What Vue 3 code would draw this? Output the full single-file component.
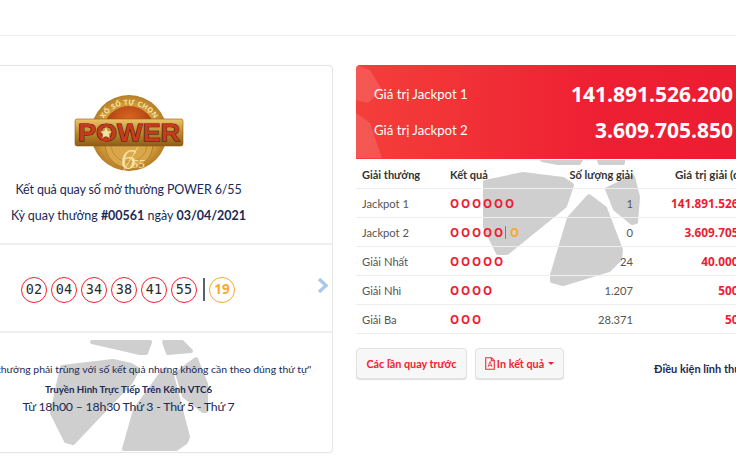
<script setup>
const balls = ['02', '04', '34', '38', '41', '55']
const rows = [
  { name: 'Jackpot 1', red: 6, gold: false, qty: '1', val: '141.891.526.200' },
  { name: 'Jackpot 2', red: 5, gold: true, qty: '0', val: '3.609.705.850' },
  { name: 'Giải Nhất', red: 5, gold: false, qty: '24', val: '40.000.000' },
  { name: 'Giải Nhì', red: 4, gold: false, qty: '1.207', val: '500.000' },
  { name: 'Giải Ba', red: 3, gold: false, qty: '28.371', val: '50.000' }
]
</script>

<template>
  <div class="page">
    <div class="topbar"></div>
    <main class="main">
      <section class="card">
        <svg class="wm-left" width="409" height="387" viewBox="-76 65 409 387" aria-hidden="true">
          <g fill="#cfcfcf" stroke="#cfcfcf" stroke-width="4" stroke-linejoin="round">
            <polygon points="92,342 150,342 146,353 140,353" />
            <polygon points="164,342 182,342 191,351 168,353" />
            <polygon points="62,367 113,361 131,365 138,369 131,382 73,443 66,441 52,413" />
            <polygon points="177,373 196,359 206,384 206,411 203,411 184,396" />
            <polygon points="164,370 172,375 188,437 186,442 176,449 124,449 135,410" />
          </g>
        </svg>
        <div class="intro">
          <svg class="logo" width="110" height="80" viewBox="0 0 110 80" aria-hidden="true">
            <defs>
              <radialGradient id="disc" cx="50%" cy="50%" r="55%">
                <stop offset="0" stop-color="#f0c766" />
                <stop offset="0.7" stop-color="#d09a38" />
                <stop offset="1" stop-color="#a9701f" />
              </radialGradient>
              <linearGradient id="band" x1="0" y1="0" x2="0" y2="1">
                <stop offset="0" stop-color="#eec468" />
                <stop offset="0.5" stop-color="#c18a2d" />
                <stop offset="1" stop-color="#8d5c17" />
              </linearGradient>
              <radialGradient id="inner" cx="50%" cy="30%" r="70%">
                <stop offset="0" stop-color="#e26a1f" />
                <stop offset="1" stop-color="#8d2c10" />
              </radialGradient>
              <path id="arc" d="M26 33 A30 30 0 0 1 84 33" />
            </defs>
            <circle cx="55" cy="39" r="38" fill="url(#disc)" />
            <circle cx="55" cy="38" r="26" fill="url(#inner)" />
            <text class="arc-text"><textPath href="#arc" startOffset="50%" text-anchor="middle">XỔ SỐ TỰ CHỌN</textPath></text>
            <circle cx="55" cy="50" r="24" fill="#d9a64a" stroke="#b27c27" stroke-width="1" />
            <circle cx="55" cy="50" r="18" fill="none" stroke="#c08c34" stroke-width="1" />
            <rect x="1" y="25" width="108" height="27" rx="2" fill="url(#band)" stroke="#8d5c17" stroke-width="0.6" />
            <text class="power" x="55" y="47" text-anchor="middle" textLength="102" lengthAdjust="spacingAndGlyphs">POWER</text>
            <polygon points="32,33 33.7,37.2 38,37.4 34.7,40 35.8,44.2 32,41.8 28.2,44.2 29.3,40 26,37.4 30.3,37.2" fill="#f6e2a8" />
            <text class="six" x="47" y="75">6</text>
            <text class="ff" x="58" y="74">55</text>
            <line x1="64" y1="53" x2="48" y2="79" stroke="#f8e3a6" stroke-width="0.8" />
          </svg>
          <p class="title">Kết quả quay số mở thưởng POWER 6/55</p>
          <p class="draw">Kỳ quay thưởng <b>#00561</b> ngày <b>03/04/2021</b></p>
        </div>
        <div class="balls">
          <span v-for="b in balls" :key="b" class="ball">{{ b }}</span>
          <span class="sep"></span>
          <span class="ball gold">19</span>
          <svg class="chev" width="11" height="15" viewBox="0 0 11 15" aria-hidden="true">
            <path d="M2 1 L9 7.5 L2 14" fill="none" stroke="#a9c9e8" stroke-width="3.4" />
          </svg>
        </div>
        <div class="note">
          <p class="quote">"Các số dự thưởng phải trùng với số kết quả nhưng không cần theo đúng thứ tự"</p>
          <p class="tv">Truyền Hình Trực Tiếp Trên Kênh VTC6</p>
          <p class="time">Từ 18h00 – 18h30 Thứ 3 - Thứ 5 - Thứ 7</p>
        </div>
      </section>

      <section class="right">
        <svg class="wm-right" width="412" height="227" viewBox="356 160 412 227" aria-hidden="true">
          <g fill="#cfcfcf" stroke="#cfcfcf" stroke-width="4" stroke-linejoin="round">
            <polygon points="485,182 523,174 563,179 572,185 565,206 507,253 498,253 485,227" />
            <polygon points="589,196 605,208 621,250 620,259 609,270 563,284 552,281 552,275 569,218" />
            <polygon points="607,189 633,177 638,197 636,222 632,223 615,209" />
            <polygon points="542,160 558,163 579,163 581,160" />
            <polygon points="599,160 600,163 623,163 623,160" />
          </g>
        </svg>
        <div class="jackpot">
          <svg class="wm-red" width="40" height="93" viewBox="0 0 40 93" aria-hidden="true">
            <g fill="#ffffff" fill-opacity="0.13">
              <polygon points="0,0 14,5 26,25 12,38 0,35" />
              <polygon points="0,48 14,58 26,93 0,93" />
            </g>
          </svg>
          <div class="jp-row"><span>Giá trị Jackpot 1</span><b>141.891.526.200</b></div>
          <div class="jp-row"><span>Giá trị Jackpot 2</span><b>3.609.705.850</b></div>
        </div>
        <div class="table">
          <div class="row head">
            <span class="c1">Giải thưởng</span>
            <span class="c2">Kết quả</span>
            <span class="c3">Số lượng giải</span>
            <span class="c4">Giá trị giải (đồng)</span>
          </div>
          <div v-for="r in rows" :key="r.name" class="row">
            <span class="c1">{{ r.name }}</span>
            <span class="c2 marks">
              <i v-for="n in r.red" :key="n">O</i>
              <template v-if="r.gold"><em class="bar"></em><i class="g">O</i></template>
            </span>
            <span class="c3">{{ r.qty }}</span>
            <span class="c4 val">{{ r.val }}</span>
          </div>
        </div>
        <div class="actions">
          <button class="btn b1">Các lần quay trước</button>
          <button class="btn btn2">
            <svg width="10" height="13" viewBox="0 0 10 13" aria-hidden="true">
              <path d="M1 .7H6.5L9.3 3.5V12.3H.7V.7Z M6.3 .8V3.7H9.2" fill="none" stroke="#f0293a" stroke-width="1.1" />
              <path d="M5 4.5 L3 10 M5 4.5 L7 10 M3.6 8.4H6.4" fill="none" stroke="#f0293a" stroke-width=".8" />
            </svg>
            In kết quả
            <span class="caret"></span>
          </button>
          <a class="terms">Điều kiện lĩnh thưởng</a>
        </div>
      </section>
    </main>
  </div>
</template>

<style>
html, body { margin: 0; background: #fff; overflow: hidden; }
</style>

<style scoped>
.page {
  width: 736px;
  height: 460px;
  overflow: hidden;
  font-family: "Lato", "Open Sans", sans-serif;
  color: #1b2a56;
}
.topbar { height: 35px; border-bottom: 1px solid #eeeeee; }
.main { display: flex; gap: 23px; margin-left: -76px; padding-top: 29px; width: 900px; }
p { margin: 0; }

.card {
  position: relative;
  width: 407px;
  height: 386px;
  flex: none;
  border: 1px solid #e6e6e6;
  border-radius: 4px;
  box-shadow: 0 0 1px #e4e4e4;
  text-align: center;
}
.wm-left { position: absolute; left: -1px; top: -1px; }
.intro { position: relative; height: 179px; box-sizing: border-box; padding-top: 28px; border-bottom: 2px solid #eeeeee; }
.logo { display: block; margin: 0 auto; width: 110px; height: 80px; }
.arc-text { font: bold 7px "Open Sans", sans-serif; fill: #f7e2ab; letter-spacing: .3px; }
.power { font: 900 24px "Liberation Sans", sans-serif; fill: #c83a1c; stroke: #2a1a10; stroke-width: 1; paint-order: stroke; }
.six { font: italic 30px "Liberation Serif", serif; fill: #f8e3a6; }
.ff { font: italic 13px "Liberation Serif", serif; fill: #f8e3a6; }
.title { margin-top: 6px; font-size: 12.5px; letter-spacing: -0.13px; line-height: 20px; }
.draw { margin-top: 6px; font-size: 12.5px; line-height: 20px; }
.draw b { font-weight: 700; }

.balls {
  position: relative;
  height: 88px;
  display: flex;
  align-items: center;
  gap: 4px;
  box-sizing: border-box;
  padding: 4px 0 0 96px;
  border-bottom: 2px solid #eeeeee;
}
.ball {
  width: 26px;
  height: 26px;
  box-sizing: border-box;
  border: 1.7px solid #f3212f;
  border-radius: 50%;
  font: 13.5px/23px "DejaVu Sans Mono", monospace;
  color: #2a2a2a;
  text-align: center;
  flex: none;
}
.ball.gold { border-color: #f9a92e; color: #f9a92e; font-family: "Open Sans", sans-serif; font-weight: 700; }
.sep { width: 2px; height: 23px; margin: -2px 0 0 2px; background: #5b5f70; flex: none; }
.chev { position: absolute; right: 4px; top: 33px; }

.note { position: relative; padding-top: 26px; display: flex; flex-direction: column; align-items: center; }
.quote { font-size: 10.4px; line-height: 20px; white-space: nowrap; }
.tv { margin-top: 1px; font-size: 9.7px; font-weight: 700; line-height: 18px; }
.time { font-size: 12.3px; letter-spacing: -0.2px; line-height: 18px; }

.right { position: relative; width: 412px; flex: none; }
.wm-right { position: absolute; left: 0; top: 95px; }
.jackpot {
  position: relative;
  overflow: hidden;
  height: 94px;
  box-sizing: border-box;
  padding: 11px 35px 0 18px;
  border-radius: 4px 4px 0 0;
  background: linear-gradient(90deg, #f43f3a 0%, #ee1f33 60%, #ec1b31 100%);
  color: #fff;
}
.wm-red { position: absolute; left: 0; top: 0; }
.jp-row { position: relative; display: flex; justify-content: space-between; align-items: center; height: 36px; font-size: 13.2px; }
.jp-row b { font-family: "Open Sans", sans-serif; font-size: 21px; font-weight: 700; }

.table { position: relative; }
.row {
  display: flex;
  align-items: center;
  height: 29px;
  box-sizing: border-box;
  border-bottom: 1.5px solid #eeeeee;
  font-size: 11.2px;
  color: #555;
  white-space: nowrap;
}
.head { color: #333; font-weight: 700; font-size: 11px; height: 30px; padding-top: 1px; }
.head .c4 { font-size: 11.6px; }
.c1 { width: 94px; padding-left: 6px; box-sizing: border-box; flex: none; }
.c2 { width: 100px; flex: none; }
.c3 { width: 83px; text-align: right; flex: none; }
.c4 { width: 129px; text-align: right; flex: none; }
.val { font-family: "Open Sans", sans-serif; font-size: 11.8px; color: #ee1c33; font-weight: 700; }
.marks { display: flex; align-items: center; }
.marks i { font-family: "Open Sans", sans-serif; font-style: normal; font-weight: 700; color: #ee1c33; width: 11px; font-size: 11.5px; }
.marks i.g { color: #f9a92e; }
.bar { width: 1px; height: 13px; background: #e0506a; margin: 0 4px 0 0; }

.actions { position: relative; display: flex; align-items: flex-start; gap: 8px; padding-top: 14px; }
.btn {
  height: 31px;
  padding: 0;
  justify-content: center;
  border: 1px solid #e2e2e2;
  border-radius: 4px;
  background: #f7f7f7;
  box-shadow: 0 1px 1px #dddddd;
  color: #f5202f;
  font: 700 10.8px "Lato", "Open Sans", sans-serif;
  white-space: nowrap;
  display: flex;
  align-items: center;
  flex: none;
}
.b1 { width: 111px; }
.btn2 { width: 89px; }
.btn svg { margin-right: 2px; }
.caret {
  margin-left: 4px;
  border-left: 3.5px solid transparent;
  border-right: 3.5px solid transparent;
  border-top: 3.5px solid #f5202f;
}
.terms {
  margin-left: 82px;
  margin-top: 14px;
  white-space: nowrap;
  font: 700 11px "Lato", "Open Sans", sans-serif;
  color: #1b2a56;
}
</style>
